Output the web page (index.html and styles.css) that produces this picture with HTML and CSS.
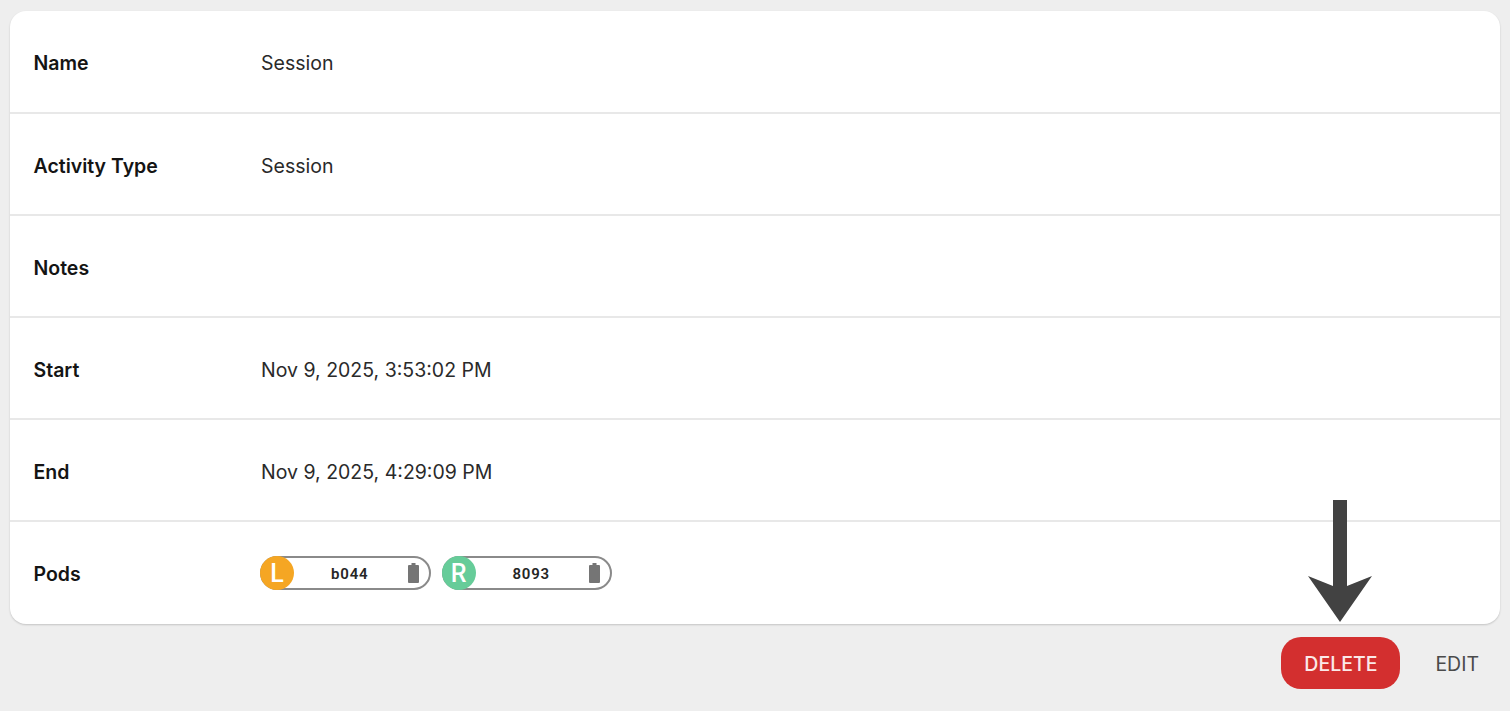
FILE: index.html
```html
<!DOCTYPE html>
<html lang="en">
<head>
    <meta charset="UTF-8">
    <meta name="viewport" content="width=device-width, initial-scale=1.0">
    <title>Activity Details</title>
    <link rel="stylesheet" href="styles.css">
</head>
<body>
    <div class="card">
        <div class="row">
            <div class="label">Name</div>
            <div class="value">Session</div>
        </div>
        <div class="row">
            <div class="label">Activity Type</div>
            <div class="value">Session</div>
        </div>
        <div class="row">
            <div class="label">Notes</div>
            <div class="value"></div>
        </div>
        <div class="row">
            <div class="label">Start</div>
            <div class="value">Nov 9, 2025, 3:53:02 PM</div>
        </div>
        <div class="row">
            <div class="label">End</div>
            <div class="value">Nov 9, 2025, 4:29:09 PM</div>
        </div>
        <div class="row">
            <div class="label">Pods</div>
            <div class="value pods">
                <div class="pod">
                    <span class="side side-left">L</span>
                    <span class="pod-id">b044</span>
                    <svg class="battery" width="11" height="20" viewBox="0 0 11 20"><path d="M3.5 0h4v2H10a1 1 0 0 1 1 1v16a1 1 0 0 1-1 1H1a1 1 0 0 1-1-1V3a1 1 0 0 1 1-1h2.5z" fill="#757575"/></svg>
                </div>
                <div class="pod">
                    <span class="side side-right">R</span>
                    <span class="pod-id">8093</span>
                    <svg class="battery" width="11" height="20" viewBox="0 0 11 20"><path d="M3.5 0h4v2H10a1 1 0 0 1 1 1v16a1 1 0 0 1-1 1H1a1 1 0 0 1-1-1V3a1 1 0 0 1 1-1h2.5z" fill="#757575"/></svg>
                </div>
            </div>
        </div>
    </div>

    <div class="actions">
        <button class="btn btn-delete">DELETE</button>
        <button class="btn btn-edit">EDIT</button>
    </div>

    <!-- annotation arrow on top of the screenshot -->
    <svg class="arrow" width="64" height="122" viewBox="0 0 64 122">
        <path d="M25 0h14v86l25-10-32 46L0 76l25 10z" fill="#424242"/>
    </svg>
</body>
</html>
```

FILE: styles.css
```css
body {
    font-family: Inter, "Liberation Sans", sans-serif;
    background-color: #eeeeee;
    color: #1a1a1a;
    margin: 0;
    padding: 11px 10px 0;
    height: 700px;
    overflow: hidden;
}
.card {
    background-color: white;
    border-radius: 16px;
    box-shadow: 0 1px 2px rgba(0, 0, 0, 0.18);
}
.row {
    display: flex;
    align-items: center;
    height: 100px;
    padding: 0 24px 0 23.5px;
    border-bottom: 2px solid #e8e8e8;
}
.row:first-child {
    height: 101px;
}
.row:last-child {
    border-bottom: none;
    height: 102px;
}
.label {
    width: 227.5px;
    padding-top: 3px;
    font-size: 19.5px;
    font-weight: 600;
    color: #141414;
}
.row:last-child .label {
    padding-top: 1px;
}
.value {
    padding-top: 3px;
    font-size: 19.5px;
    color: #2a2a2a;
}
.pods {
    display: flex;
    gap: 11px;
    padding-top: 0;
    margin-left: -1px;
}
.pod {
    display: flex;
    align-items: center;
    width: 170.5px;
    height: 34px;
    box-sizing: border-box;
    border: 2px solid #8a8a8a;
    border-radius: 17px;
}
.side {
    display: flex;
    align-items: center;
    justify-content: center;
    width: 34px;
    height: 34px;
    margin-left: -2px;
    border-radius: 50%;
    color: white;
    font-family: Roboto, sans-serif;
    font-size: 25px;
    font-weight: 500;
    flex-shrink: 0;
}
.side-left {
    background-color: #f5a623;
}
.side-right {
    background-color: #66cc99;
}
.pod-id {
    flex: 1;
    padding: 1px 2px 0 0;
    text-align: center;
    font-family: Roboto, sans-serif;
    font-size: 15px;
    font-weight: 600;
    letter-spacing: 0.8px;
    color: #262626;
}
.battery {
    margin-right: 10px;
    flex-shrink: 0;
}
.actions {
    display: flex;
    justify-content: flex-end;
    align-items: center;
    gap: 35px;
    margin-top: 13px;
    padding-right: 21px;
}
.btn {
    font-family: Inter, "Liberation Sans", sans-serif;
    font-size: 19.5px;
    border: none;
    background: none;
    padding: 2px 0 0;
    cursor: pointer;
}
.btn-delete {
    width: 119px;
    height: 52px;
    background-color: #d32f2f;
    color: #fbe9e9;
    font-weight: 500;
    border-radius: 20px;
}
.btn-edit {
    color: #4a4a4a;
}
.arrow {
    position: absolute;
    left: 1308px;
    top: 500px;
}
```
